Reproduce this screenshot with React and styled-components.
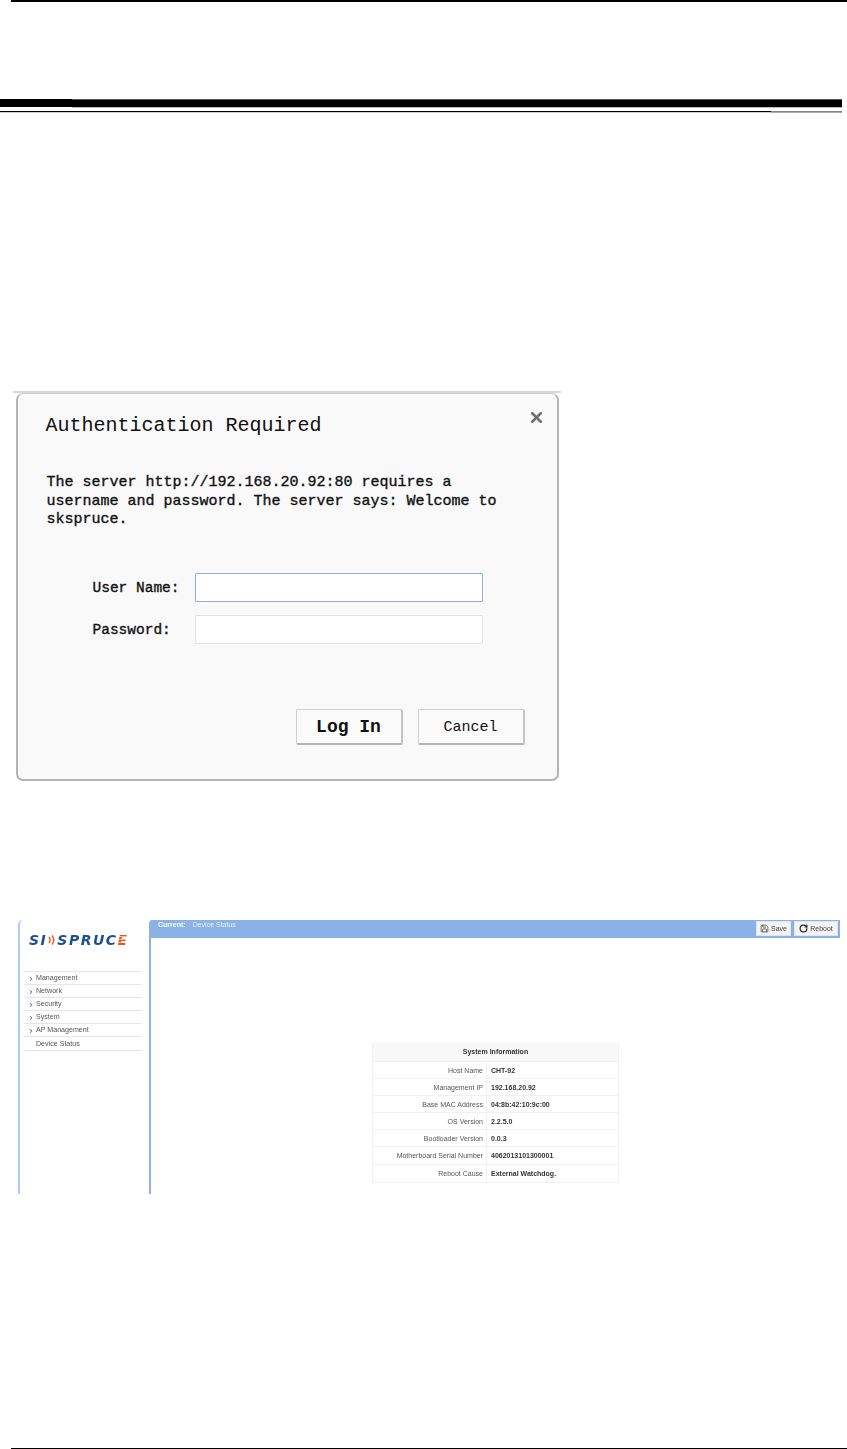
import React from "react";
import styled, { createGlobalStyle } from "styled-components";
import { Save, RotateCw, X, ChevronRight } from "lucide-react";

const Global = createGlobalStyle`
  html, body { margin: 0; padding: 0; background: #fff; }
  body { font-family: "Liberation Sans", Arial, sans-serif; }
`;

const Page = styled.div`
  width: 847px;
  height: 1449px;
  display: flex;
  flex-direction: column;
  overflow: hidden;
`;

const TopRule = styled.div`
  height: 1.5px;
  margin-left: 11px;
  background: #000;
`;

const HeavyRule = styled.div`
  width: 842px;
  height: 9px;
  margin-top: 97.5px;
  background:
    linear-gradient(90deg, #000 0 72px, #555 72px) top / 100% 1px no-repeat,
    linear-gradient(90deg, #fff 0 72px, #bbb 72px) bottom / 100% 1px no-repeat,
    #000;
`;

const ThinRule = styled.div`
  width: 842px;
  height: 2px;
  margin-top: 3px;
  background:
    linear-gradient(90deg, #000 0 771px, #888 771px) top / 100% 1px no-repeat,
    linear-gradient(90deg, #ccc 0 771px, #aaa 771px) bottom / 100% 1px no-repeat;
`;

const Dialog = styled.section`
  width: 548px;
  margin: 278px 0 0 13px;
  border-top: 2px solid #d8d8d8;
  display: flex;
  flex-direction: column;
  align-items: center;
`;

const Card = styled.div`
  box-sizing: border-box;
  width: 543px;
  padding: 17px 12px 34px 28px;
  background: #f9f9f9;
  border: 2px solid #b4b4b4;
  border-top: 1px solid #d0d0d0;
  border-radius: 7px;
  font-family: "Liberation Mono", "DejaVu Sans Mono", monospace;
  color: #111;
`;

const DialogHead = styled.div`
  display: flex;
  justify-content: space-between;
  align-items: flex-start;
`;

const Title = styled.h1`
  margin: 0;
  font-size: 20px;
  line-height: 30px;
  font-weight: 400;
`;

const Close = styled.span`
  display: flex;
  color: #6f6f6f;
  margin-top: -2px;
`;

const Message = styled.p`
  margin: 33px 0 0 1px;
  width: 470px;
  font-size: 15px;
  line-height: 18.5px;
  -webkit-text-stroke: 0.35px #111;
`;

const Form = styled.div`
  display: grid;
  grid-template-columns: 102px 288px;
  row-gap: 13px;
  margin: 43px 0 0 47px;
`;

const Label = styled.label`
  padding-top: 2px;
  font-size: 14.5px;
  -webkit-text-stroke: 0.35px #111;
  align-self: center;
`;

const Field = styled.input`
  box-sizing: border-box;
  height: 29px;
  width: 288px;
  padding: 0 4px;
  background: #fff;
  border: 1.5px solid ${(p) => (p.$focused ? "#8fb1d9" : "#e2e2e2")};
  outline: none;
  border-radius: 1px;
`;

const Actions = styled.div`
  display: flex;
  justify-content: flex-end;
  gap: 15px;
  margin: 65px 20px 0 0;
`;

const DialogButton = styled.button`
  box-sizing: border-box;
  width: 107px;
  height: 36px;
  padding: 2px 0 0;
  background: #fbfbfb;
  border: 1px solid #cfcfcf;
  border-bottom: 2px solid #b4b4b4;
  border-right: 2px solid #c4c4c4;
  border-radius: 2px;
  font-family: "Liberation Mono", monospace;
  font-size: ${(p) => (p.$primary ? "18px" : "15px")};
  font-weight: ${(p) => (p.$primary ? 700 : 400)};
  color: #111;
`;

const Console = styled.section`
  display: flex;
  width: 822px;
  height: 274px;
  margin: 139px 0 0 18px;
  font-size: 7px;
  filter: blur(0.35px);
`;

const Sidebar = styled.aside`
  box-sizing: border-box;
  width: 131px;
  padding: 14px 7px 0 4px;
  border-left: 2px solid #a9cdf5;
  border-top-left-radius: 5px;
`;

const Logo = styled.div`
  display: flex;
  align-items: center;
  height: 12px;
  margin-left: 5px;
  font-family: "DejaVu Sans", sans-serif;
  font-size: 14px;
  font-weight: 700;
  font-style: italic;
  letter-spacing: 1.5px;
  color: #1b4f93;
  white-space: nowrap;
`;

const LogoTail = styled.span`
  color: transparent;
  background: repeating-linear-gradient(0deg, #e8551d 0 2px, #f7b594 2px 3px);
  -webkit-background-clip: text;
  background-clip: text;
`;

const Menu = styled.nav`
  margin-top: 25px;
  border-top: 1px solid #e6e6e6;
`;

const MenuRow = styled.div`
  box-sizing: border-box;
  display: flex;
  align-items: center;
  height: 13.2px;
  padding-left: 4px;
  border-bottom: 1px solid #e6e6e6;
  color: #555;
  font-size: 7.1px;
`;

const Arrow = styled.span`
  display: flex;
  width: 8px;
  margin-top: 2px;
  color: #2c5a9e;
`;

const Main = styled.div`
  flex: 1;
  display: flex;
  flex-direction: column;
  border-left: 2px solid #8ab2e6;
  border-top-left-radius: 4px;
`;

const StatusBar = styled.header`
  display: flex;
  justify-content: space-between;
  height: 18px;
  padding: 0 2px 0 7px;
  background: #8ab2e6;
  color: #e6effa;
`;

const Crumb = styled.div`
  display: flex;
  gap: 7px;
  height: 11px;
  line-height: 10px;
`;

const CrumbLabel = styled.strong`
  color: #fff;
`;

const Tools = styled.div`
  display: flex;
  gap: 3px;
  margin-top: 1px;
`;

const ToolButton = styled.button`
  box-sizing: border-box;
  display: flex;
  align-items: center;
  justify-content: center;
  gap: 2px;
  width: ${(p) => p.$w}px;
  height: 15px;
  padding: 0;
  background: #f4f4f4;
  border: 1px solid #dfe6ef;
  font: 7px "Liberation Sans", Arial, sans-serif;
  color: #444;
`;

const Info = styled.div`
  width: 247px;
  margin: 104px auto 0;
  color: #555;
  border-left: 1px solid #f1f1f1;
  border-right: 1px solid #f1f1f1;
  border-bottom: 1px solid #f1f1f1;
  box-sizing: border-box;
`;

const InfoHead = styled.div`
  height: 19px;
  line-height: 19px;
  text-align: center;
  font-weight: 700;
  color: #333;
  background: #f8f8f8;
  border-bottom: 1px solid #f1f1f1;
`;

const InfoRow = styled.div`
  box-sizing: border-box;
  display: grid;
  grid-template-columns: 114px 1fr;
  height: 17.2px;
  line-height: 17px;
  border-bottom: 1px solid #f1f1f1;
  &:last-child { border-bottom: 0; }
`;

const InfoKey = styled.div`
  padding-right: 3px;
  text-align: right;
  border-right: 1px solid #f1f1f1;
  white-space: nowrap;
`;

const InfoValue = styled.div`
  padding-left: 4px;
  font-weight: 700;
  color: #333;
  white-space: nowrap;
`;

const BottomRule = styled.div`
  height: 1.5px;
  margin: auto 0 0 11px;
  background: #000;
`;

const menu = [
  { label: "Management", arrow: true },
  { label: "Network", arrow: true },
  { label: "Security", arrow: true },
  { label: "System", arrow: true },
  { label: "AP Management", arrow: true },
  { label: "Device Status", arrow: false },
];

const info = [
  ["Host Name", "CHT-92"],
  ["Management IP", "192.168.20.92"],
  ["Base MAC Address", "04:8b:42:10:9c:00"],
  ["OS Version", "2.2.5.0"],
  ["Bootloader Version", "0.0.3"],
  ["Motherboard Serial Number", "4062013101300001"],
  ["Reboot Cause", "External Watchdog."],
];

export default function App() {
  return (
    <Page>
      <Global />
      <TopRule />
      <HeavyRule />
      <ThinRule />

      <Dialog>
        <Card>
          <DialogHead>
            <Title>Authentication Required</Title>
            <Close>
              <X size={17} strokeWidth={3.6} />
            </Close>
          </DialogHead>
          <Message>
            The server http://192.168.20.92:80 requires a username and password. The server says: Welcome to skspruce.
          </Message>
          <Form>
            <Label>User Name:</Label>
            <Field $focused />
            <Label>Password:</Label>
            <Field type="password" />
          </Form>
          <Actions>
            <DialogButton $primary>Log In</DialogButton>
            <DialogButton>Cancel</DialogButton>
          </Actions>
        </Card>
      </Dialog>

      <Console>
        <Sidebar>
          <Logo>
            SI
            <svg width="10" height="12" viewBox="0 0 10 12" fill="none" stroke="#e8551d" strokeWidth="1.4">
              <path d="M2 3c1.5 2 1.5 4 0 6" />
              <path d="M5 1.5c2.4 3 2.4 6 0 9" />
            </svg>
            SPRUC<LogoTail>E</LogoTail>
          </Logo>
          <Menu>
            {menu.map((item) => (
              <MenuRow key={item.label}>
                <Arrow>{item.arrow && <ChevronRight size={6} strokeWidth={4} />}</Arrow>
                {item.label}
              </MenuRow>
            ))}
          </Menu>
        </Sidebar>
        <Main>
          <StatusBar>
            <Crumb>
              <CrumbLabel>Current:</CrumbLabel>
              <span>Device Status</span>
            </Crumb>
            <Tools>
              <ToolButton $w={35}>
                <Save size={9} strokeWidth={2} />
                Save
              </ToolButton>
              <ToolButton $w={44}>
                <RotateCw size={9} strokeWidth={3} color="#222" />
                Reboot
              </ToolButton>
            </Tools>
          </StatusBar>
          <Info>
            <InfoHead>System Information</InfoHead>
            {info.map(([key, value]) => (
              <InfoRow key={key}>
                <InfoKey>{key}</InfoKey>
                <InfoValue>{value}</InfoValue>
              </InfoRow>
            ))}
          </Info>
        </Main>
      </Console>

      <BottomRule />
    </Page>
  );
}
